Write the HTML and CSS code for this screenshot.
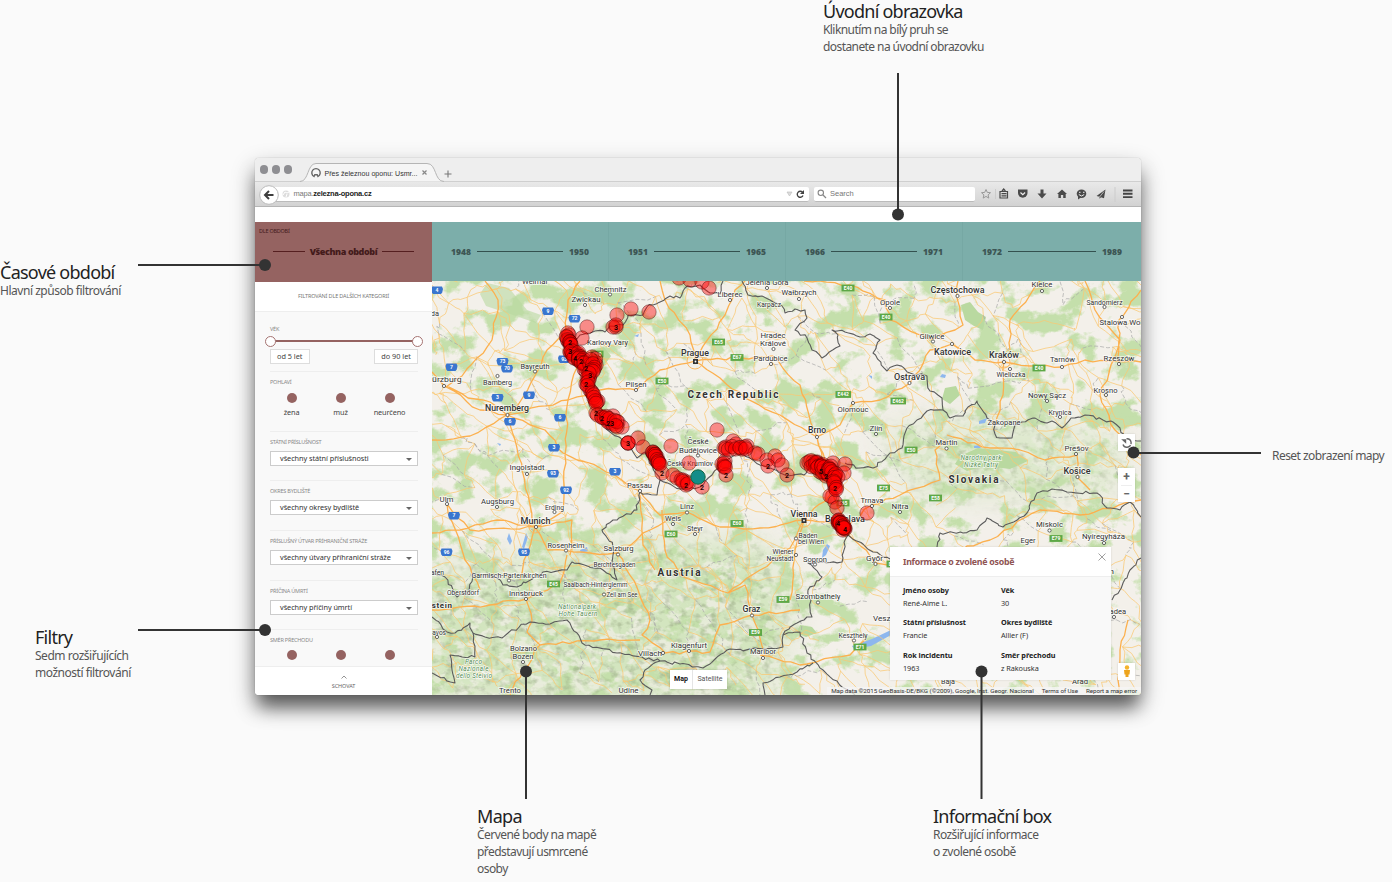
FILE: index.html
```html
<!DOCTYPE html>
<html lang="cs">
<head>
<meta charset="utf-8">
<title>Přes železnou oponu</title>
<link rel="stylesheet" href="styles.css">
</head>
<body>
<main class="stage">
  <section class="window">
    <div class="tabbar">
      <i class="light"></i><i class="light"></i><i class="light"></i>
      <svg class="tab-shape" viewBox="0 0 150 20" width="150" height="20">
        <path d="M0 19.500C9 19.500 7 1.500 16 1.500H127C137 1.500 134 19.500 144 19.500" fill="#f5f5f5" stroke="#b5b5b5"/>
        <path d="M14 14.500a4.200 4.200 0 1 1 4 0l-.8-1.700h-2.400z" fill="none" stroke="#666" stroke-width="1.400"/>
        <text x="24.500" y="13.500" class="tab-text" textLength="93" lengthAdjust="spacingAndGlyphs">Přes železnou oponu: Usmr...</text>
        <path d="M122.500 8.500l4 4m0-4l-4 4" stroke="#888" stroke-width="1.200"/>
      </svg>
      <svg class="plus" width="8" height="8" viewBox="0 0 8 8"><path d="M4 .5v7M.5 4h7" stroke="#777" stroke-width="1.100"/></svg>
    </div>
    <div class="toolbar">
      <div class="address">
        <svg class="globe" width="8" height="8" viewBox="0 0 8 8"><circle cx="4" cy="4" r="3.500" fill="#ddd"/><path d="M1 5l2-3 2 1 2-1M4 7l1-3" stroke="#fff" fill="none"/></svg>
        <span class="url">mapa.<b>zelezna-opona.cz</b></span>
        <svg class="address-end" width="20" height="10" viewBox="0 0 20 10"><path d="M1 3h5L3.500 7z" fill="#ddd" stroke="#bbb" stroke-width=".6"/><path d="M16.500 3.300A3 3 0 1 0 17 6.500" fill="none" stroke="#444" stroke-width="1.400"/><path d="M18 1v4h-4z" fill="#444"/></svg>
      </div>
      <div class="search">
        <svg width="10" height="10" viewBox="0 0 10 10"><circle cx="3.800" cy="3.800" r="2.700" fill="none" stroke="#888" stroke-width="1.100"/><path d="M6 6l3 3" stroke="#888" stroke-width="1.300"/></svg>
        <span>Search</span>
      </div>
      <svg class="tools" width="160" height="16" viewBox="978 187 160 16">
        <path d="M986 190.500l1.300 2.900 3.200.3-2.400 2.200.7 3.200-2.800-1.700-2.800 1.700.7-3.200-2.400-2.200 3.200-.3z" fill="none" stroke="#999"/>
        <path d="M995.500 190v10M1115 188v15" stroke="#ccc"/>
        <path d="M1000 192.500h7.500v6.500h-7.500zM1002 192l1.700-2 1.700 2M1001.500 194.700h5M1001.500 196.800h5" fill="none" stroke="#4a4a4a" stroke-width="1.200"/>
        <path d="M1018 190.500h9.500v3.500a4.700 4.700 0 0 1-9.500 0z" fill="#4a4a4a"/><path d="M1020.500 193.500l2.300 2.200 2.300-2.200" stroke="#eee" fill="none" stroke-width="1.200"/>
        <path d="M1040.500 190.500h3v4h3l-4.500 5-4.500-5h3z" fill="#4a4a4a"/>
        <path d="M1057 195l5-4.500 5 4.500h-1.300v4h-2.500v-3h-2.300v3h-2.500v-4z" fill="#4a4a4a"/>
        <ellipse cx="1081.500" cy="194.800" rx="4.800" ry="4.200" fill="#4a4a4a"/><path d="M1078 197v3.500l3-2z" fill="#4a4a4a"/><path d="M1079 193.300h1.500m2.500 0h1.500M1078.800 195.500q2.700 3 5.400 0" stroke="#eee" fill="none"/>
        <path d="M1105.500 190.500l-9 6.500 3 .8v2l1.500-1.500 3 1z" fill="#4a4a4a"/><path d="M1104 192.500l-4.500 5.500" stroke="#ddd" stroke-width=".7"/>
        <path d="M1123 191.500h9.500M1123 194.800h9.500M1123 198.100h9.500" stroke="#444" stroke-width="1.900"/>
      </svg>
      <svg class="back" width="20" height="20" viewBox="0 0 20 20"><circle cx="10" cy="10" r="9.300" fill="#fff" stroke="#bbb"/><path d="M14.500 10H7M10 6l-4 4 4 4" fill="none" stroke="#3d3d3d" stroke-width="2"/></svg>
    </div>
    <div class="home-strip"></div>
    <nav class="periods">
      <div class="period period-all"><small>DLE OBDOBÍ</small><i></i><b>Všechna období</b><i></i></div>
      <div class="period"><b>1948</b><i></i><b>1950</b></div>
      <div class="period"><b>1951</b><i></i><b>1965</b></div>
      <div class="period"><b>1966</b><i></i><b>1971</b></div>
      <div class="period"><b>1972</b><i></i><b>1989</b></div>
    </nav>
    <div class="content">
      <aside class="filters">
        <header>FILTROVÁNÍ DLE DALŠÍCH KATEGORIÍ</header>
        <div class="filter-body">
          <div class="filter age"><h4>VĚK</h4><div class="range"><i></i><i></i></div><div class="limits"><span>od 5 let</span><span>do 90 let</span></div></div>
          <div class="filter sex"><h4>POHLAVÍ</h4><div class="choices"><span><i></i>žena</span><span><i></i>muž</span><span><i></i>neurčeno</span></div></div>
          <div class="filter"><h4>STÁTNÍ PŘÍSLUŠNOST</h4><div class="select">všechny státní příslušnosti</div></div>
          <div class="filter"><h4>OKRES BYDLIŠTĚ</h4><div class="select">všechny okresy bydliště</div></div>
          <div class="filter"><h4>PŘÍSLUŠNÝ ÚTVAR PŘÍHRANIČNÍ STRÁŽE</h4><div class="select">všechny útvary příhraniční stráže</div></div>
          <div class="filter"><h4>PŘÍČINA ÚMRTÍ</h4><div class="select">všechny příčiny úmrtí</div></div>
          <div class="filter"><h4>SMĚR PŘECHODU</h4><div class="choices"><span><i></i></span><span><i></i></span><span><i></i></span></div></div>
        </div>
        <footer><svg width="6" height="4" viewBox="0 0 6 4"><path d="M.5 3.500L3 1l2.500 2.500" fill="none" stroke="#777" stroke-width=".8"/></svg>SCHOVAT</footer>
      </aside>
      <div class="map">
        <svg id="map" width="709" height="414" viewBox="432 281 709 414">
          <defs>
            <filter id="forest" x="0" y="0" width="100%" height="100%" color-interpolation-filters="sRGB"><feTurbulence type="fractalNoise" baseFrequency=".036 .042" numOctaves="5" seed="8"/><feColorMatrix values="0 0 0 0 .77  0 0 0 0 .875  0 0 0 0 .67  8 0 0 0 -4"/></filter>
            <filter id="relief" x="0" y="0" width="100%" height="100%" color-interpolation-filters="sRGB"><feTurbulence type="fractalNoise" baseFrequency=".11 .14" numOctaves="3" seed="3"/><feColorMatrix values="0 0 0 0 .58  0 0 0 0 .64  0 0 0 0 .5  3.200 0 0 0 -1.600"/></filter>
            <filter id="peaks" x="0" y="0" width="100%" height="100%" color-interpolation-filters="sRGB"><feTurbulence type="fractalNoise" baseFrequency=".07 .1" numOctaves="3" seed="21"/><feColorMatrix values="0 0 0 0 .95  0 0 0 0 .94  0 0 0 0 .91  7 0 0 0 -3.400"/></filter>
            <filter id="soft"><feGaussianBlur stdDeviation="14"/></filter>
            <mask id="highlands"><g filter="url(#soft)" fill="#fff"><path d="M420 575L560 555 660 540 770 545 790 620 770 700H420z"/><path d="M880 430L1000 415 1120 440 1120 490 920 500z" opacity=".7"/></g></mask>
          </defs>
          <path d="M432 281h709v414H432z" fill="#f3f0ea"/>
          <path d="M432 281h709v414H432z" mask="url(#highlands)" fill="#d3e5bf"/>
          <path d="M432 281h709v414H432z" filter="url(#forest)"/>
          <g mask="url(#highlands)"><path d="M432 281h709v414H432z" filter="url(#peaks)" opacity=".7"/><path d="M432 281h709v414H432z" filter="url(#relief)" opacity=".5"/></g>
          <g fill="#b9d9a0"><path d="M961 305l9-3 8 10 8 5-3 13-9-4-9-6zM945 388l11-2 4 9-10 9-8-5zM960 456l18-8 38 4 12 9-18 8-24-3-19 5-12-7zM590 350l14-3 7 9-8 11-10-5zM800 625l12 2 5 6-11 4-9-4z"/><path d="M487 283l22 5 18 22 14 5-5 8-20-7-30-10-6-12z" opacity=".6"/></g>
          <g fill="#8db7ee"><path d="M827 544l3 2-4 9-4 3 1-8zM852 646l20-7 19-9v5l-20 11-17 3zM509 533l3 8-2 4-3-6zM526 533l2 4-4 12-2-2zM580 550l7-3 1 4-7 2zM979 421l8-3-2 5-6 1zM974 446l5-1 2 3h-7zM634 336l5-2-1 3zM942 374l4 1-1 3-5-1zM497 443l4 1-1 2zM868 375l4 1v3z"/></g>
          <g id="minor" class="road-minor"></g>
          <g class="road-major">
            <path d="M447 386L468 398 490 402 507 415 518 405 536 374 547 350 566 330 568 300 580 281M432 440L470 436 507 415 545 430 563 453 600 468 640 491 660 515 687 512 720 527 760 528 804 520M432 372L446 387 462 376 492 340 498 300 485 281M507 415L515 440 522 470 530 505 535 527 562 512 565 455 568 400 580 350M535 527L497 520 460 530 432 533M447 504L470 530 535 527 548 550 590 553 617 553 650 530 687 512M447 504L465 560 480 590M535 527L524 560 520 580M617 553L638 590 650 620 642 635 665 653 710 652 720 625 752 615 765 655M507 415L480 410 446 387"/>
            <path d="M432 610L490 605 526 599 560 583 567 555M526 599L532 621 527 632 540 645 523 670 510 695M540 645L600 640 640 640M695 361L660 370 636 390 600 390 568 400 507 415M695 361L720 378 745 398 780 415 817 437 840 425 853 403 880 400 910 383 930 350 952 344 975 360 1004 362 1030 366 1062 367 1085 360 1141 362M695 361L690 335 665 300 660 281M695 361L725 315 735 290 745 281M695 361L740 358 773 356 800 385 817 437 825 460 835 500 845 528 826 522 804 520 830 495 817 437M804 520L790 548 760 570 728 593 745 585 752 615 800 610M728 593L680 575 665 550 662 510M804 520L795 550 790 600M845 528L875 563 920 570M845 528L872 505 900 495 940 480 935 450 947 440M947 435L990 448 1020 450 1045 460 1077 455 1078 478 1090 490M804 281L850 285 885 300 890 320 930 340 955 330 963 325 957 298 958 281M1010 350L1010 320 1030 295 1040 281M1085 281L1095 310 1120 340 1100 395 1115 430 1141 455M1119 364L1119 320 1141 290M1004 362L1003 395 995 425M760 655L800 665 850 655 865 640M570 555L572 520 535 527M640 495L643 545 655 570M930 560L990 540 1040 510 1080 515 1141 500M1119 695L1120 650 1128 620"/>
          </g>
          <g class="road-halo"><circle cx="695" cy="361" r="8"/><circle cx="535" cy="527" r="6"/><circle cx="804" cy="520" r="7"/><circle cx="1004" cy="362" r="6"/></g>
          <g id="borders" class="borders">
            <path d="M573 340L580 335 595 331 605 332 610 326 623 325 628 315 643 315 647 307 653 305 670 296 680 298 685 288 700 285 710 293 720 294 723 281M742 281L748 295 762 296 770 300 782 306 785 313 795 309 805 310 807 318 795 330 807 338 812 350 822 358 840 346 838 335 832 330 845 332 860 337 870 334 880 340 873 353 887 371 897 365 910 373 927 376 930 391 942 398 943 410 927 411 917 420 907 428 902 448 890 453 873 468 860 468 845 463"/>
            <path d="M943 410L950 418 963 416 968 407 977 401 987 418 995 425 995 434 1000 438 1012 438 1015 425 1033 418 1047 423 1052 421 1062 428 1071 418 1085 415 1103 420 1113 422 1120 428 1123 438 1141 441M1141 517L1130 502 1120 510 1107 508 1097 493 1067 492 1052 489 1037 493 1027 513 1003 527 987 518 977 530 963 533 940 533 937 547M890 559L873 552 848 535 845 540 842 562 808 563 822 577 808 590 812 617 797 623 783 635 783 647 763 649 727 650 703 668 680 664 660 661 617 653 582 643 567 620 550 624 530 622 508 633 502 638 485 637 473 633 470 623 455 633 447 632 432 617M473 633L475 657 450 655 455 683 432 673"/>
            <path d="M573 340L578 365 590 400 610 432 628 443 637 458 645 452 660 480 657 495 640 492 637 510 613 520 602 530 613 547 612 562 617 580 603 570 572 562 567 570 543 572 517 587 503 585 497 578 473 573 467 593 457 597 445 577 432 573M660 480L680 489 700 487 712 475 725 460 740 453 760 465 787 476 804 475 812 463M783 635L800 632 807 653 823 670 842 687 855 695M813 663L797 672 780 677 763 683 765 695M660 661L645 670 640 680 652 690 650 695M1141 558L1130 570 1120 590 1112 600"/>
          </g>
          <g id="labels"></g>
          <g id="markers"></g>
        </svg>
        <div class="maptype"><b>Map</b><span>Satellite</span></div>
        <div class="credits"><span>Map data ©2015 GeoBasis-DE/BKG (©2009), Google, Inst. Geogr. Nacional</span><span>Terms of Use</span><span>Report a map error</span></div>
        <div class="ctl reset"><svg width="12" height="12" viewBox="0 0 12 12"><path d="M5.500 1.800A4.200 4.200 0 1 1 2 7.500" fill="none" stroke="#666" stroke-width="1.400" stroke-dasharray="8 1 12"/><path d="M.2 2.200h5v4.600z" fill="#666"/></svg></div>
        <div class="ctl zoomer"><span>+</span><span>−</span></div>
        <div class="ctl pegman"><svg width="8" height="13" viewBox="0 0 8 13"><circle cx="4" cy="2.500" r="2.200" fill="#f5b32c"/><path d="M1 5h6l-.5 4.500h-1V12h-3V9.500h-1z" fill="#eda41d"/></svg></div>
        <article class="info">
          <header>Informace o zvolené osobě<svg width="8" height="8" viewBox="0 0 8 8"><path d="M.5.5l7 7m0-7l-7 7" stroke="#888" stroke-width=".8"/></svg></header>
          <dl>
            <div><dt>Jméno osoby</dt><dd>René-Aime L.</dd></div><div><dt>Věk</dt><dd>30</dd></div>
            <div><dt>Státní příslušnost</dt><dd>Francie</dd></div><div><dt>Okres bydliště</dt><dd>Allier (F)</dd></div>
            <div><dt>Rok incidentu</dt><dd>1963</dd></div><div><dt>Směr přechodu</dt><dd>z Rakouska</dd></div>
          </dl>
        </article>
      </div>
    </div>
  </section>

  <svg class="leaders" width="1392" height="882" viewBox="0 0 1392 882">
    <path d="M898 73V214M138 265H265M138 630H265M526 672V799M981.500 672V799M1134 453H1261" stroke="#333" stroke-width="2"/>
    <g fill="#333"><circle cx="898" cy="214.500" r="6"/><circle cx="265" cy="265" r="6"/><circle cx="265" cy="630" r="6"/><circle cx="526" cy="671.500" r="6"/><circle cx="981.500" cy="671.500" r="6"/><circle cx="1133.500" cy="452.500" r="6"/></g>
  </svg>
  <div class="note n-home"><h2>Úvodní obrazovka</h2><p>Kliknutím na bílý pruh se<br>dostanete na úvodní obrazovku</p></div>
  <div class="note n-period"><h2>Časové období</h2><p>Hlavní způsob filtrování</p></div>
  <div class="note n-filter"><h2>Filtry</h2><p>Sedm rozšiřujících<br>možností filtrování</p></div>
  <div class="note n-map"><h2>Mapa</h2><p>Červené body na mapě<br>představují usmrcené<br>osoby</p></div>
  <div class="note n-info"><h2>Informační box</h2><p>Rozšiřující informace<br>o zvolené osobě</p></div>
  <div class="note n-reset"><p>Reset zobrazení mapy</p></div>
</main>
<script src="map.js"></script>
</body>
</html>
```
FILE: styles.css
```css
* { box-sizing: border-box; }
body { margin: 0; background: #fafafa; font-family: "Noto Sans", "Open Sans", sans-serif; color: #333; }
.stage { position: relative; width: 1392px; height: 882px; padding: 158px 0 0 255px; overflow: hidden; }
.window { width: 886px; height: 537px; display: flex; flex-direction: column; border-radius: 4px; overflow: hidden; background: #fff; box-shadow: 0 15px 18px -3px rgba(0,0,0,.5), 0 10px 24px rgba(0,0,0,.32), 0 0 1px rgba(0,0,0,.4); }
.tabbar { height: 24px; flex: none; background: #eee; border-bottom: 1px solid #cfcfcf; display: flex; align-items: center; padding-left: 4.500px; gap: 4px; }
.light { width: 8.300px; height: 8.300px; border-radius: 50%; background: #8e8e92; }
.tab-shape { margin: 5px 0 0 4px; }
.tab-text { font: 7px "Liberation Sans", sans-serif; fill: #333; }
.plus { margin: 8px 0 0 -10px; }
.toolbar { position: relative; height: 25px; flex: none; background: linear-gradient(#e9e9e9, #d2d2d2); border-bottom: 1px solid #b5b5b5; display: flex; align-items: center; padding-left: 15px; font: 7.500px "Liberation Sans", sans-serif; }
.back { position: absolute; left: 4px; top: 3px; }
.address, .search { height: 15px; background: #fff; border-bottom: 1px solid #bbb; border-radius: 2px; display: flex; align-items: center; }
.address { width: 539px; padding-left: 12px; gap: 3.500px; }
.url { color: #777; letter-spacing: -.22px; }
.url b { color: #222; }
.address-end { margin-left: auto; margin-right: 3px; }
.search { width: 161px; margin-left: 5px; padding-left: 3px; gap: 3px; color: #777; }
.tools { margin-left: 3px; }
.home-strip { height: 15px; flex: none; background: #fff; }
.periods { height: 59px; flex: none; display: grid; grid-template-columns: 177px 177px 177px 177px 178px; background: #7caeaa; }
.period { display: flex; align-items: center; gap: 6px; padding: 0 19px 1px; color: #3d5654; font: bold 8.500px "Noto Sans", sans-serif; border-right: 1px solid #76a8a4; }
.period:last-child { border: 0; }
.period i { height: 1px; flex: 1; background: #34514f; }
.period-all { position: relative; height: 60px; background: #956361; color: #441b1b; border: 0; padding: 0 18px 2px; gap: 5px; }
.period-all b { font-size: 9px; letter-spacing: -.4px; }
.period-all i { background: #551f20; }
.period-all small { position: absolute; left: 4px; top: 5px; font: 5.500px "Noto Sans", sans-serif; letter-spacing: -.25px; }
.content { height: 414px; display: flex; }
.filters { width: 177px; flex: none; background: #f9f9f9; display: flex; flex-direction: column; padding-top: 1px; color: #444; font-size: 7.300px; }
.filters header { height: 30px; flex: none; background: #fff; border-bottom: 1px solid #eee; font-size: 5.500px; line-height: 28px; text-align: center; color: #777; letter-spacing: -.16px; }
.filter-body { flex: 1; padding: 12px 14px 0 15px; overflow: hidden; }
.filter { height: 49.700px; padding-top: 6px; border-top: 1px solid #eee; }
.filter h4 { margin: 0 0 4px; font-weight: 400; font-size: 5.500px; line-height: 9px; color: #888; letter-spacing: -.22px; white-space: nowrap; }
.age { height: 46.500px; padding-top: 1px; border: 0; }
.range { height: 2px; margin: 7px 0 7px; background: #956361; display: flex; justify-content: space-between; align-items: center; }
.age h4 { margin-bottom: 0; }
.range { margin-top: 6px; }
.range i { width: 11px; height: 11px; margin: 0 -5px; border: 1px solid #a57371; border-radius: 50%; background: #fff; }
.limits { display: flex; justify-content: space-between; }
.limits span { height: 15px; border: 1px solid #ddd; background: #fff; padding: 0 6px; line-height: 13px; }
.sex { height: 60px; }
.sex h4 { margin-bottom: 5px; }
.choices { display: grid; grid-template-columns: repeat(3, 49px); margin-left: -3px; }
.choices span { display: flex; flex-direction: column; align-items: center; line-height: 10px; letter-spacing: -.1px; }
.choices i { width: 10px; height: 10px; border-radius: 50%; background: #956361; margin: 1px 0 4px; }
.select { height: 15px; border: 1px solid #ccc; background: #fff; padding: 0 5px 0 9px; line-height: 13px; display: flex; justify-content: space-between; align-items: center; white-space: nowrap; letter-spacing: -.06px; color: #333; }
.select::after { content: ""; border: 3px solid transparent; border-top: 3px solid #666; border-bottom: 0; margin-top: 2px; }
.filters footer { height: 29px; flex: none; border-top: 1px solid #eee; background: #fff; display: flex; flex-direction: column; align-items: center; padding-top: 8px; gap: 3px; font-size: 5.500px; line-height: 8px; color: #666; letter-spacing: -.1px; }
.map { position: relative; width: 709px; height: 414px; overflow: hidden; font-family: Roboto, sans-serif; }
.map > svg { display: block; }
.road-minor { fill: none; stroke: #fac873; stroke-width: .75; }
.road-minor .district { stroke: #a8a8a8; stroke-width: .7; stroke-dasharray: 4 2; }
.road-major { fill: none; stroke: #fcb04e; stroke-width: 1.300; stroke-linejoin: round; }
.road-halo { fill: none; stroke: #fcb860; }
.borders { fill: none; stroke: #5c5c5c; stroke-width: 1.100; stroke-linejoin: round; }
.label { font-family: Roboto, sans-serif; fill: #333; stroke: #fff; stroke-opacity: .75; stroke-width: 1.500px; paint-order: stroke; text-anchor: middle; }
.label.park { fill: #58905a; font-style: italic; }
.shield { font: bold 5px Roboto, sans-serif; fill: #fff; text-anchor: middle; }
.town { fill: #fff; stroke: #444; stroke-width: .8; }
.count { font: bold 7px Roboto, sans-serif; fill: #210000; text-anchor: middle; }
.maptype { position: absolute; left: 238px; top: 389px; height: 19px; display: flex; background: #fff; font-size: 7px; line-height: 19px; box-shadow: 0 0 2px rgba(0,0,0,.2); }
.maptype b { width: 22px; text-align: center; color: #111; }
.maptype span { width: 35px; border-left: 1px solid #e5e5e5; text-align: center; color: #555; }
.credits { position: absolute; right: 0; bottom: 0; height: 8px; padding: 0 4px; display: flex; gap: 8px; white-space: nowrap; font-size: 6.250px; line-height: 8px; letter-spacing: -.06px; color: #333; background: rgba(245,245,245,.75); }
.ctl { position: absolute; left: 686px; width: 17px; background: #fff; display: flex; align-items: center; justify-content: center; box-shadow: 0 0 2px rgba(0,0,0,.15); }
.reset { top: 153px; height: 17px; }
.zoomer { top: 187px; height: 34px; flex-direction: column; font: bold 12px/16px Roboto, sans-serif; color: #666; }
.zoomer span + span { border-top: 1px solid #eee; width: 11px; text-align: center; }
.pegman { top: 382px; height: 17px; }
.info { position: absolute; left: 458px; top: 266px; width: 221px; height: 133px; background: #f9f9f9; box-shadow: 0 0 2px rgba(0,0,0,.12); font: 7.300px "Noto Sans", sans-serif; }
.info header { height: 30px; padding: 0 5px 0 13px; display: flex; justify-content: space-between; background: #fff; border-bottom: 1px solid #eee; color: #8f5453; font-weight: bold; font-size: 8.800px; line-height: 30px; letter-spacing: -.27px; }
.info header svg { margin-top: 6px; }
.info dl { margin: 0; padding: 7px 13px 0; display: grid; grid-template-columns: 98px 1fr; grid-auto-rows: 32.300px; }
.info dt { font-weight: bold; line-height: 13px; letter-spacing: -.06px; color: #222; }
.info dd { margin: 0; line-height: 13px; letter-spacing: -.06px; }
.leaders { position: absolute; left: 0; top: 0; }
.note { position: absolute; white-space: nowrap; }
.note h2 { margin: 0; font-weight: 400; font-size: 18px; line-height: 22px; letter-spacing: -.75px; color: #222; }
.note p { margin: -1px 0 0; font-size: 12px; line-height: 17px; letter-spacing: -.55px; color: #555; }
.n-home { left: 823px; top: 0; }
.n-home p { letter-spacing: -.58px; }
.n-period { left: 0; top: 261px; }
.n-period p, .n-filter p { letter-spacing: -.47px; }
.n-filter { left: 35px; top: 626px; }
.n-map { left: 477px; top: 805px; }
.n-map h2 { letter-spacing: -.65px; }
.n-info { left: 933px; top: 805px; }
.n-reset { left: 1272px; top: 448px; }
```
FILE: map.js
```js
const NS = 'http://www.w3.org/2000/svg';
function add(parent, tag, attrs, text) {
  const el = document.createElementNS(NS, tag);
  for (const k in attrs) el.setAttribute(k, attrs[k]);
  if (text !== undefined) el.textContent = text;
  parent.appendChild(el);
  return el;
}
let seed = 41;
const rnd = () => (seed = (seed * 16807) % 2147483647) / 2147483647;

// Secondary roads and district lines on a jittered lattice
const minor = document.getElementById('minor');
const cols = 34, rows = 20, nodes = [];
for (let r = 0; r < rows; r++) for (let c = 0; c < cols; c++)
  nodes.push([426 + c * 22 + (rnd() - .5) * 20, 276 + r * 22 + (rnd() - .5) * 20]);
function wiggle(a, b, jitter, steps) {
  let d = '';
  for (let i = 1; i <= steps; i++) {
    const t = i / steps, j = i < steps ? jitter : 0;
    d += `L${(a[0] + (b[0] - a[0]) * t + (rnd() - .5) * j).toFixed(1)} ${(a[1] + (b[1] - a[1]) * t + (rnd() - .5) * j).toFixed(1)}`;
  }
  return d;
}
for (let r = 0; r < rows - 1; r++) for (let c = 0; c < cols - 1; c++) {
  const n = r * cols + c;
  for (const m of [n + 1, n + cols, n + cols + 1]) {
    const p = rnd(), d = `M${nodes[n][0].toFixed(1)} ${nodes[n][1].toFixed(1)}` + wiggle(nodes[n], nodes[m], 5, 4);
    if (p < .55) add(minor, 'path', { d });
    else if (p < .65) add(minor, 'path', { d, class: 'district' });
  }
}

// Roughen straight segments of roads and borders
function roughen(path, jitter, len) {
  const out = path.getAttribute('d').split('M').filter(Boolean).map(sub => {
    const v = sub.match(/[\d.]+/g).map(Number);
    let d = `M${v[0]} ${v[1]}`;
    for (let i = 2; i < v.length; i += 2) {
      const a = [v[i - 2], v[i - 1]], b = [v[i], v[i + 1]];
      d += wiggle(a, b, jitter, Math.max(1, Math.round(Math.hypot(b[0] - a[0], b[1] - a[1]) / len)));
    }
    return d;
  }).join('');
  path.setAttribute('d', out);
}
document.querySelectorAll('.borders path').forEach(p => roughen(p, 3, 4));
document.querySelectorAll('.road-major path').forEach(p => roughen(p, 3, 8));

const labels = document.getElementById('labels');
// [text, centre x, baseline, width, size, weight]
const names = [
  ['Chemnitz',610.5,291.5,32,7.5],['Zwickau',586,302,29,7.5],['Weimar',535,284,26,7.5],['Karlovy Vary',607.5,344.5,41,7.5],
  ['Bayreuth',535,369,29,7.5],['Bamberg',497.5,385,29,7.5],['Würzburg',443,382,37,7.5],['Nuremberg',507,411,44,8.5,500],
  ['Pilsen',636,387,21,7.5],['Ingolstadt',527,470,35,7.5],['Passau',639.5,487.5,25,7.5],['Prague',695,356,28,8.5,500],
  ['Liberec',730,297,25,7.5],['Jelenia Góra',767,285,43,7.5],['Wałbrzych',799,295,35,7.5],['Karpacz',769,307,24,6.8],
  ['Hradec',773,338,25,7.5],['Králové',773,345.5,26,7.5],['Pardubice',770.5,361,34,7.5],['Opole',890,305,20,7.5],
  ['Olomouc',853,412,31,7.5],['Brno',817,433,18,8.5,500],['Zlín',876,431,13,7.5],['České',698,444,21,7.5],['Budějovice',698,452.5,38,7.5],
  ['Český Krumlov',690,466,46,6.8],['Częstochowa',957.5,292.5,54,8.5,500],['Kielce',1042,287,21,7.5],['Sandomierz',1104.5,304.5,36,6.8],
  ['Stalowa Wola',1123,325,47,7.5],['Gliwice',932,338.5,25,7.5],['Katowice',952.5,354.5,37,8.5,500],['Kraków',1004,358,30,8.5,500],
  ['Tarnów',1062.5,362,25,7.5],['Rzeszów',1119,360.5,31,7.5],['Wieliczka',1011,376.5,29,6.8],['Ostrava',909.5,379.5,31,8.5,500],
  ['Nowy Sącz',1047,397.5,38,7.5],['Krosno',1105.5,392.5,24,7.5],['Krynica',1060,415,23,6.8],['Zakopane',1004,425,33,7.5],
  ['Martin',946.5,445,22,7.5],['Prešov',1076.5,450.5,24,7.5],['Košice',1077,473.5,27,8.5,500],['Trnava',872,503,23,7.5],
  ['Nitra',900,508.5,17,7.5],['Linz',687,509,14,7.5],['Wels',673,521,16,7.5],['Steyr',695,531,16,6.8],['Vienna',804,516.5,27,8.5,500],
  ['Bratislava',845,522,40,8.5,500],['Baden',808,537.5,19,6.8],['bei Wien',811,544,26,6.8],['Wiener',783,554,21,6.8],['Neustadt',780,561,27,6.8],
  ['Sopron',815,561.5,24,7.5],['Győr',874.5,561,17,7.5],['Szombathely',818,598.5,45,7.5],['Graz',751.5,611.5,18,8.5,500],
  ['Klagenfurt',689,647.5,36,7.5],['Maribor',763,654,26,7.5],['Keszthely',853,637.5,29,6.8],['Veszprém',891,621,36,7.5],
  ['Villach',650,656,24,7.5],['Ulm',446.5,501.5,14,7.5],['Augsburg',497.5,504,33,7.5],['Erding',554.5,509.5,19,6.8],
  ['Munich',535.5,523.5,30,8.5,500],['Rosenheim',566,547.5,37,7.5],['Salzburg',618.5,551,30,7.5],['Berchtesgaden',614.5,566.5,42,6.5],
  ['Garmisch-Partenkirchen',509,578,75,6.8],['Oberstdorf',463,595,32,6.8],['Innsbruck',526,595.5,34,7.5],['Saalbach-Hinterglemm',595.5,586.5,64,6.5],
  ['Zell am See',622,596.5,31,6.5],['Bolzano',523.5,650.5,27,7.5],['Bozen',523,658.5,21,7.5],['Davos',437,635,18,6.8],['Trento',510,693,22,7.5],
  ['Udine',628.5,693,20,7.5],['Hafen',435,575,18,7.5],['Miskolc',1049.5,526.5,27,7.5],['Eger',1028,543,15,7.5],['Nyíregyháza',1103.5,539,43,7.5],
  ['Oradea',1114,614,24,7.5],['Baja',948,684,14,6.8],['Arad',1080,684,16,7.5],['Fulda',430,316,18,7.5],['Debrecen',1095,574,38,7.5],
];
names.forEach(([t, x, y, w, s, b]) => add(labels, 'text', { x, y, class: 'label', 'font-size': s, 'font-weight': b || 400, textLength: w, lengthAdjust: 'spacingAndGlyphs' }, t));
[['Czech Republic',733,397.5,91,10],['Slovakia',973.5,482.5,50,10],['Austria',679,576,43,10],['Liechtenstein',424,608,56,8]]
  .forEach(([t, x, y, w, s]) => add(labels, 'text', { x, y, class: 'label', 'font-size': s, 'font-weight': 700, textLength: w }, t));
[['Narodny park',981,459.5,41],['Nizke Tatry',981,467,34],['Nationalpark',577,608.5,38],['Hohe Tauern',578,615.5,39],['Parco',473.5,664,17],['Nazionale',473.5,670.5,30],['dello Stelvio',474,677.5,36]]
  .forEach(([t, x, y, w]) => add(labels, 'text', { x, y, class: 'label park', 'font-size': 6.5, textLength: w }, t));

const towns = [[610,294.5],[585,305],[535,371.5],[497.5,376],[444,386],[507.5,415],[636,390],[527,474],[640,491],[730,300],[767,288],[799,299],[773.5,349],[771,364],[890,308],[853,403],[817,437],[876,434],[698,455.5],[957.5,296],[1042,291],[1104.5,307],[1122,317],[933,341.5],[952,344],[1004,362],[1062,367],[1119,364],[1010,369],[909.5,383],[1047,401],[1106,395],[1060,417],[946.5,448.5],[1076,454],[1077.5,477],[872,506],[900,512],[687,512.5],[673,524],[695,534],[796,538.5],[796,555],[815,564.5],[875.5,564],[818,602.5],[752,615.5],[689,651],[763,658],[854,640.5],[663,653],[447,504],[497,507],[554.5,512],[536,527],[566,550.5],[618,554.5],[509,580.5],[526,599],[604,594.5],[523,662],[437,637],[1049.5,530.5],[1104,543],[1114,617]];
towns.forEach(([cx, cy]) => add(labels, 'circle', { cx, cy, r: 1.6, class: 'town' }));
[[695.5,361.5],[804,520.5]].forEach(([x, y]) => {
  add(labels, 'rect', { x: x - 2.5, y: y - 2.5, width: 5, height: 5, fill: '#333' });
  add(labels, 'circle', { cx: x, cy: y, r: .9, fill: '#fff' });
});

[['4',437,290],['9',548,311],['72',574.5,318.5],['93',564,359],['73',502.5,361.5],['70',507,368.5],['7',451.5,367],['3',497.5,397.5],['9',529,395],['6',560,417.5],['6',510,421.5],['3',554,447.5],['93',553,473.5],['3',615,471.5],['92',566,490],['7',454,515.5],['96',446.5,552],['95',524,552]]
  .forEach(([t, x, y]) => {
    add(labels, 'path', { d: `M${x - 5} ${y - 3.5}h10l1 2.500-.8 3.500-1.200 1.500h-8l-1.200-1.500-.8-3.500z`, fill: '#3a76cf' });
    add(labels, 'text', { x, y: y + 1.9, class: 'shield' }, t);
  });
[['E65',718.5,342],['E67',737,357.5],['E50',662,381],['E40',848,288],['E40',886,317],['E442',842,394.5],['E462',897,401],['E40',1039,368],['E50',911,450],['E60',737,523.5],['E60',671,534],['E75',883.5,488],['E58',935.5,498],['E79',1056,538.5],['E45',553.5,584],['E59',783,599.5],['E59',755.5,632.5],['E71',860,647],['E65',843,503],['E50',597,354],['E75',893,564]]
  .forEach(([t, x, y]) => {
    add(labels, 'rect', { x: x - 6.5, y: y - 3.4, width: t.length > 3 ? 15.5 : 13, height: 6.8, fill: '#5da846' });
    add(labels, 'text', { x: t.length > 3 ? x + 1.2 : x, y: y + 1.8, class: 'shield' }, t);
  });

const markers = document.getElementById('markers');
const points = [679,278,690,280,702,282,709,288,631,309,649,312,617,315,616,327,613,327,616,325,587,327,568,333,567,337,569,335,570,342,568,341,582,338,570,351,573,350,575,352,578,354,575,358,578,360,581,362,580,360,585,365,583,363,586,368,588,370,592,357,595,362,593,367,596,365,590,375,589,378,586,384,588,385,590,390,592,392,595,399,597,402,598,401,596,413,602,417,613,416,610,423,607,420,608,422,613,424,618,422,622,427,617,427,628,443,628,443,628,443,638,438,643,447,653,452,654,453,655,455,657,457,656,459,658,462,659,463,662,473,671,446,673,475,677,478,689,463,686,485,683,480,687,482,702,487,717,430,733,441,736,444,724,448,726,447,740,448,742,449,747,446,745,447,755,453,758,454,767,460,775,456,778,460,768,466,782,465,787,475,725,461,722,464,724,466,724,467,726,475,807,463,809,462,813,462,817,462,816,464,818,465,820,466,820,472,822,473,823,471,826,476,827,474,828,467,833,463,830,470,845,464,844,473,835,475,834,478,835,482,835,488,835,486,832,497,830,496,835,502,837,508,838,522,840,523,839,520,842,527,841,525,845,529,844,528,843,530,867,513];
// Dense border stretches: [x1, y1, x2, y2, count, spread]
[[567,336,571,346,6,3],[571,350,588,368,20,6],[594,356,590,378,8,6],[590,370,586,388,4,3],[591,392,598,403,5,3],[598,414,618,425,9,4],[653,451,660,465,8,2],[680,480,688,485,3,3],[724,448,746,447,6,4],[723,462,726,468,2,2],[811,462,830,473,18,7],[828,466,836,480,8,5],[835,480,835,490,4,3],[838,520,845,529,12,3]]
  .forEach(([x1, y1, x2, y2, n, s]) => {
    for (let i = 0; i < n; i++) {
      const t = (i + .5) / n;
      points.push(x1 + (x2 - x1) * t + (rnd() - .5) * s, y1 + (y2 - y1) * t + (rnd() - .5) * s);
    }
  });
for (let i = 0; i < points.length; i += 2)
  add(markers, 'circle', { cx: points[i], cy: points[i + 1], r: 7.2, fill: '#f00', 'fill-opacity': .42, stroke: '#300', 'stroke-opacity': .45, 'stroke-width': .9 });
add(markers, 'circle', { cx: 698, cy: 477, r: 7.2, fill: '#138d89', stroke: '#164', 'stroke-width': 1 });
[['3',616,330],['2',570,345],['3',570,354],['4',575,361],['2',581,364],['2',586,371],['3',590,378],['2',586,387],['2',596,416],['2',602,421],['23',610,426],['3',628,446],['2',662,476],['2',686,488],['2',702,490],['2',726,478],['2',768,469],['2',787,478],['5',821,474],['2',826,479],['2',835,491],['4',838,526],['4',845,532]]
  .forEach(([t, x, y]) => add(markers, 'text', { x, y: y - .5, class: 'count' }, t));
```
